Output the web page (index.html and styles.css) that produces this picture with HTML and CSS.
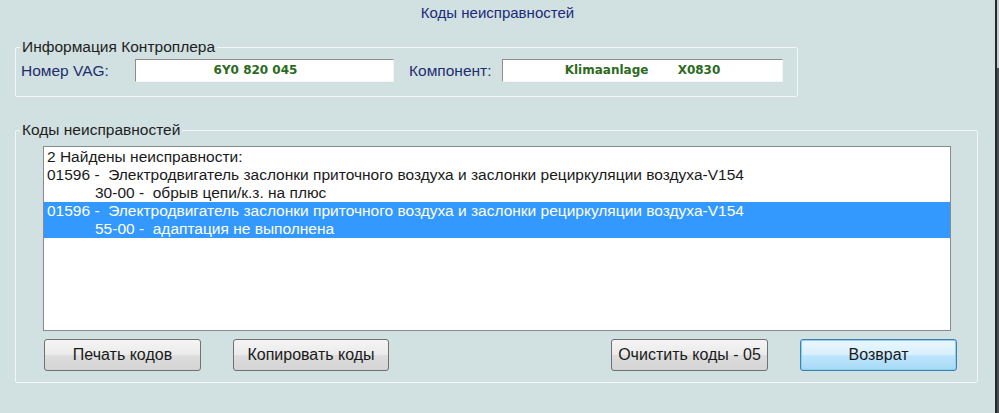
FILE: index.html
```html
<!DOCTYPE html>
<html lang="ru">
<head>
<meta charset="utf-8">
<title>Коды неисправностей</title>
<link rel="stylesheet" href="styles.css">
</head>
<body>
<div class="window">
  <main class="main">
    <h1 class="title">Коды неисправностей</h1>

    <fieldset class="group group-info">
      <legend class="legend">Информация Контроплера</legend>
      <div class="info-row">
        <span class="label label-vag">Номер VAG:</span>
        <div class="field field-vag">6Y0 820 045</div>
        <span class="label label-comp">Компонент:</span>
        <div class="field field-comp">Klimaanlage       X0830</div>
      </div>
    </fieldset>

    <fieldset class="group group-codes">
      <legend class="legend">Коды неисправностей</legend>
      <div class="listbox">
        <div class="line">2 Найдены неисправности:</div>
        <div class="line">01596 -  Электродвигатель заслонки приточного воздуха и заслонки рециркуляции воздуха-V154</div>
        <div class="line sub">30-00 -  обрыв цепи/к.з. на плюс</div>
        <div class="line selected">01596 -  Электродвигатель заслонки приточного воздуха и заслонки рециркуляции воздуха-V154</div>
        <div class="line sub selected">55-00 -  адаптация не выполнена</div>
      </div>
      <div class="buttons">
        <button class="btn">Печать кодов</button>
        <button class="btn btn-narrow">Копировать коды</button>
        <button class="btn btn-push">Очистить коды - 05</button>
        <button class="btn btn-default">Возврат</button>
      </div>
    </fieldset>
  </main>
  <div class="edge"></div>
</div>
</body>
</html>
```

FILE: styles.css
```css
html, body {
  margin: 0;
  padding: 0;
}
body {
  width: 999px;
  height: 413px;
  overflow: hidden;
  background: #d1e0e1;
  font-family: "Liberation Sans", Arial, sans-serif;
  font-size: 15.5px;
  color: #1a1a1a;
}
.window {
  display: flex;
  height: 413px;
}
.main {
  flex: none;
  width: 995px;
  display: flex;
  flex-direction: column;
}
.edge {
  flex: none;
  width: 2px;
  border-left: 2px solid #26292c;
  background: linear-gradient(to bottom, #c4c9cb 0, #c4c9cb 68px, #4a4e52 68px, #4a4e52 100%);
}
.title {
  margin: 0 0 16px 0;
  padding: 4px 0 0 0;
  height: 18px;
  line-height: 18px;
  font-size: 15px;
  font-weight: normal;
  text-align: center;
  color: #1c2a7a;
}
.group {
  margin: 0 0 0 15px;
  padding: 0;
  border: 1px solid #f3f7f7;
  border-radius: 2px;
  min-width: 0;
}
.legend {
  margin-left: 4px;
  padding: 0 2px;
  line-height: 18px;
  height: 18px;
  font-size: 15.5px;
  color: #1e1e1e;
}
.group-info {
  width: 781px;
}
.info-row {
  display: flex;
  align-items: center;
  margin: 3px 0 14px 5px;
  height: 23px;
}
.label {
  flex: none;
  color: #1f2d6e;
  font-size: 15.5px;
}
.label-vag {
  width: 114px;
}
.label-comp {
  width: 93px;
  margin-left: 15px;
}
.field {
  flex: none;
  box-sizing: border-box;
  height: 23px;
  background: #ffffff;
  border-top: 1px solid #8d8d8d;
  border-left: 1px solid #8d8d8d;
  border-right: 1px solid #f4f4f4;
  border-bottom: 1px solid #f4f4f4;
  font-family: "DejaVu Sans", Verdana, sans-serif;
  font-weight: bold;
  font-size: 12px;
  line-height: 21px;
  color: #2b6b1e;
  text-align: center;
  white-space: pre;
}
.field-vag {
  width: 259px;
  padding-right: 18px;
}
.field-comp {
  width: 281px;
}
.group-codes {
  width: 961px;
  margin-top: 24px;
}
.listbox {
  box-sizing: border-box;
  width: 908px;
  height: 185px;
  margin: 7px 0 0 27px;
  padding: 1px 0 0 0;
  background: #ffffff;
  border: 1px solid #858a8e;
}
.line {
  height: 18px;
  line-height: 18px;
  padding-left: 3px;
  white-space: pre;
  color: #1a1a1a;
}
.line.sub {
  padding-left: 51px;
}
.line.selected {
  background: #3399ff;
  color: #ffffff;
}
.buttons {
  display: flex;
  width: 913px;
  margin: 8px 0 11px 28px;
  gap: 32px;
}
.btn {
  flex: none;
  box-sizing: border-box;
  width: 157px;
  height: 32px;
  padding: 0;
  border: 1px solid #707070;
  border-radius: 3px;
  background: linear-gradient(to bottom, #f4f4f4 0%, #ebebeb 48%, #dddddd 52%, #d4d4d4 100%);
  font-family: "Liberation Sans", Arial, sans-serif;
  font-size: 16px;
  color: #1a1a1a;
}
.btn-narrow {
  width: 156px;
}
.btn-push {
  margin-left: auto;
}
.btn-default {
  border-color: #3c7fb1;
  box-shadow: inset 0 0 0 1px #8fd0f0;
  background: linear-gradient(to bottom, #eaf6fd 0%, #d9f0fc 48%, #bee6fd 52%, #a7d9f5 100%);
}
```
